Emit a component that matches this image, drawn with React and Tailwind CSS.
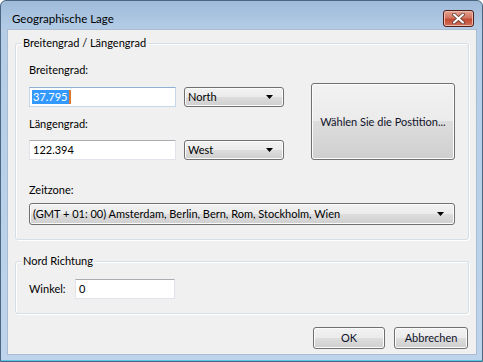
import React from "react";

const font = { fontFamily: 'Lato, "Liberation Sans", sans-serif' };

function Arrow() {
  return (
    <svg width="7" height="4" viewBox="0 0 7 4" className="shrink-0">
      <path d="M0 0h7L3.5 4z" fill="#000" />
    </svg>
  );
}

function Combo({ value, className }) {
  return (
    <div
      className={
        "flex items-center justify-between rounded-[3px] border border-[#707070] bg-[linear-gradient(#f2f2f2_0%,#ebebeb_50%,#dddddd_50%,#cfcfcf_100%)] pl-[3px] pr-[10px] shadow-[inset_0_0_0_1px_#fcfcfc] " +
        className
      }
    >
      <span className="whitespace-nowrap text-[11px] leading-[14px] text-black">{value}</span>
      <Arrow />
    </div>
  );
}

function Btn({ children, className }) {
  return (
    <div
      className={
        "flex items-center justify-center whitespace-nowrap rounded-[3px] border border-[#707070] bg-[linear-gradient(#f2f2f2_0%,#ebebeb_50%,#dddddd_50%,#cfcfcf_100%)] shadow-[inset_0_0_0_1px_#fcfcfc] text-[11px] leading-[14px] text-[#10132a] " +
        className
      }
    >
      {children}
    </div>
  );
}

function Group({ title, className, children }) {
  return (
    <div
      className={
        "relative ml-[7px] w-[454px] rounded-[3px] border border-[#d5dfe5] shadow-[inset_1px_1px_0_#fff,1px_1px_0_#fff] " +
        className
      }
    >
      <span className="absolute left-[5px] top-[-9px] bg-[#f0f0f0] px-[2px] text-[11px] leading-[16px] text-black">
        {title}
      </span>
      {children}
    </div>
  );
}

export default function App() {
  return (
    <div style={font} className="h-[362px] w-[483px] overflow-hidden">
      <div className="flex h-[362px] w-[483px] flex-col rounded-t-[6px] border border-[#4c6580] bg-[linear-gradient(#9fbbda_0px,#b5cde7_30px,#bdd4ec_100%)] shadow-[inset_0_-1px_0_#59c6e4]">
        <div className="flex h-[28px] shrink-0 items-start justify-between pl-[11px] pr-[8px]">
          <span className="pt-[10px] text-[11.5px] leading-[16px] text-black">Geographische Lage</span>
          <div className="mt-[9px] flex h-[17px] w-[31px] items-center justify-center rounded-[3px] border border-[#4f1f1a] bg-[linear-gradient(#e4a592_0%,#d27560_45%,#c24a33_55%,#d0705a_100%)] shadow-[inset_0_0_0_1px_#f0b8aa]">
            <svg width="13" height="11" viewBox="0 0 13 11">
              <path d="M2 1.5L11 9.5M11 1.5L2 9.5" stroke="#5b3a36" strokeWidth="3.6" strokeLinecap="round" />
              <path d="M2 1.5L11 9.5M11 1.5L2 9.5" stroke="#fff" strokeWidth="2" strokeLinecap="round" />
            </svg>
          </div>
        </div>

        <div className="ml-[6px] flex w-[470px] flex-col border border-[#a9bcd0] bg-[#f0f0f0] text-black">
          <Group title="Breitengrad / Längengrad" className="mt-[13px] h-[197px]">
            <div className="flex items-start pl-[13px] pt-[18px]">
              <div className="flex flex-col">
                <span className="text-[11px] leading-[16px]">Breitengrad:</span>
                <div className="mt-[9px] flex gap-[8px]">
                  <div className="flex h-[20px] w-[147px] items-center border border-[#c5d6e8] border-t-[#8fb0d4] bg-white pl-[2px]">
                    <span className="bg-[#3399ff] px-[1px] text-[11px] leading-[14px] text-white">37.795</span>
                    <span className="h-[14px] w-[2px] bg-[#e07a2a]" />
                  </div>
                  <Combo value="North" className="h-[20px] w-[100px]" />
                </div>
                <span className="mt-[9px] text-[11px] leading-[16px]">Längengrad:</span>
                <div className="mt-[8px] flex gap-[8px]">
                  <div className="flex h-[20px] w-[147px] items-center border border-[#e2e3ea] border-t-[#abadb3] bg-white pl-[3px]">
                    <span className="text-[11px] leading-[14px]">122.394</span>
                  </div>
                  <Combo value="West" className="h-[20px] w-[100px]" />
                </div>
              </div>
              <Btn className="ml-[27px] mt-[21px] h-[77px] w-[144px]">Wählen Sie die Postition...</Btn>
            </div>
            <div className="flex flex-col pl-[13px]">
              <span className="mt-[22px] text-[11px] leading-[16px]">Zeitzone:</span>
              <Combo
                value="(GMT + 01: 00) Amsterdam, Berlin, Bern, Rom, Stockholm, Wien"
                className="mt-[5px] h-[22px] w-[426px] pr-[8px]"
              />
            </div>
          </Group>

          <Group title="Nord Richtung" className="mt-[21px] h-[53px]">
            <div className="flex items-center pl-[13px] pt-[17px]">
              <span className="w-[46px] text-[11px] leading-[16px]">Winkel:</span>
              <div className="flex h-[20px] w-[100px] items-center border border-[#e2e3ea] border-t-[#abadb3] bg-white pl-[3px]">
                <span className="text-[11px] leading-[14px]">0</span>
              </div>
            </div>
          </Group>

          <div className="mb-[5px] mt-[13px] flex justify-end gap-[9px] pr-[8px]">
            <Btn className="h-[22px] w-[72px]">OK</Btn>
            <Btn className="h-[22px] w-[74px]">Abbrechen</Btn>
          </div>
        </div>
      </div>
    </div>
  );
}
